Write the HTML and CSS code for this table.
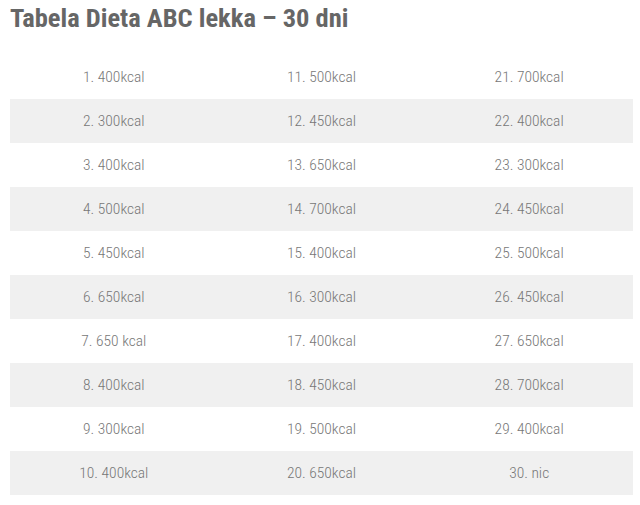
FILE: index.html
```html
<!DOCTYPE html>
<html lang="pl">
<head>
<meta charset="utf-8">
<link rel="stylesheet" href="styles.css">
</head>
<body>
<h2 class="title">Tabela Dieta ABC lekka – 30 dni</h2>
<table class="diet">
<tbody>
<tr><td>1. 400kcal</td><td>11. 500kcal</td><td>21. 700kcal</td></tr>
<tr><td>2. 300kcal</td><td>12. 450kcal</td><td>22. 400kcal</td></tr>
<tr><td>3. 400kcal</td><td>13. 650kcal</td><td>23. 300kcal</td></tr>
<tr><td>4. 500kcal</td><td>14. 700kcal</td><td>24. 450kcal</td></tr>
<tr><td>5. 450kcal</td><td>15. 400kcal</td><td>25. 500kcal</td></tr>
<tr><td>6. 650kcal</td><td>16. 300kcal</td><td>26. 450kcal</td></tr>
<tr><td>7. 650 kcal</td><td>17. 400kcal</td><td>27. 650kcal</td></tr>
<tr><td>8. 400kcal</td><td>18. 450kcal</td><td>28. 700kcal</td></tr>
<tr><td>9. 300kcal</td><td>19. 500kcal</td><td>29. 400kcal</td></tr>
<tr><td>10. 400kcal</td><td>20. 650kcal</td><td>30. nic</td></tr>
</tbody>
</table>
</body>
</html>
```
FILE: styles.css
```css
html, body {
  margin: 0;
  padding: 0;
  background: #fff;
}
body {
  padding: 0 7px 0 10px;
  font-family: Roboto, "Liberation Sans", sans-serif;
  font-stretch: 75%;
}
.title {
  margin: 0;
  padding-top: 2px;
  height: 55px;
  box-sizing: border-box;
  font-size: 26.5px;
  font-weight: 700;
  color: #666;
  line-height: 32px;
}
.diet {
  width: 623px;
  border-collapse: collapse;
  table-layout: fixed;
}
.diet td {
  height: 44px;
  padding: 0;
  text-align: center;
  font-size: 15.5px;
  font-weight: 300;
  color: #777;
}
.diet tr:nth-child(even) td {
  background: #f0f0f0;
}
```
